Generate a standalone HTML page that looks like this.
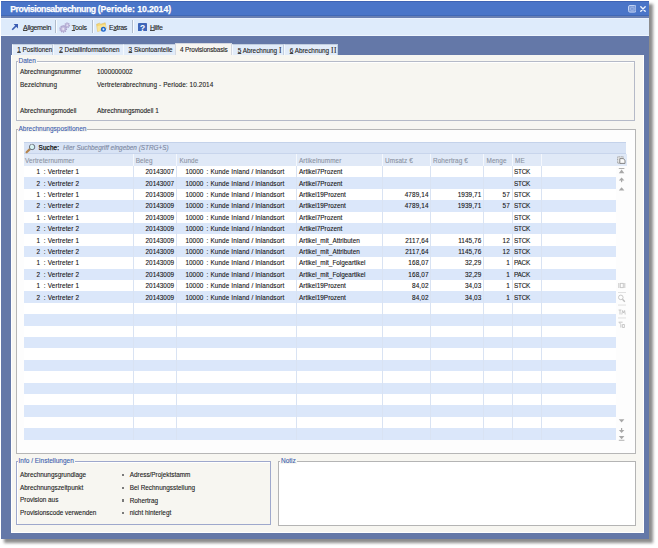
<!DOCTYPE html>
<html><head><meta charset="utf-8">
<style>
*{margin:0;padding:0;box-sizing:border-box}
html,body{width:658px;height:548px;overflow:hidden;background:#ffffff;position:relative}
body{font-family:"Liberation Sans",sans-serif;font-size:6.4px;color:#222;-webkit-text-stroke:0.1px currentColor}
.a{position:absolute}
.shadow{position:absolute;left:4px;top:4px;width:648.5px;height:539px;background:rgba(0,0,0,0.45);filter:blur(1.7px)}
.win{position:absolute;left:1px;top:1px;width:648px;height:538.3px;background:#6478a8}
.title{position:absolute;left:1px;top:1px;width:648px;height:15px;background:#4a75c8;border-top:1px solid #3f64b4;border-bottom:1px solid #4068b6}
.titleline{position:absolute;left:1px;top:16px;width:648px;height:1.5px;background:#6a80b2}
.ttxt{position:absolute;left:10.2px;top:4px;font-weight:bold;font-size:8.7px;color:#fff;white-space:nowrap;-webkit-text-stroke:0.25px #fff}
.toolbar{position:absolute;left:1px;top:17.5px;width:648px;height:18.2px;background:#deebfb;border-top:1px solid #eaf2fd;border-bottom:1px solid #eef5fe}
.tb{position:absolute;top:23.6px;font-size:7px;letter-spacing:-0.3px;color:#222;white-space:nowrap}
u{text-decoration-thickness:0.65px;text-underline-offset:0.3px;text-decoration-color:#444}
.tsep{position:absolute;top:19.8px;width:1px;height:12.8px;background:#b0bccc;box-shadow:1px 0 0 #f8fbff}
.panel{position:absolute;left:10.5px;top:55px;width:633.5px;height:478px;background:#f7f6f1;border-right:1px solid #fff;border-bottom:1px solid #fff;border-left:1px solid #fff}
.tab{position:absolute;top:44.3px;height:11px;background:#e2ecf9;border:1px solid #c2cedf;border-bottom:none;border-left-color:#f4f8fd;white-space:nowrap;font-size:6.4px;color:#222;padding-top:1.0px}
.tab.act{top:43.3px;height:12.2px;background:#f7f6f1;padding-top:2.2px;border-color:#d4d8e0}
.grp{position:absolute;border:1px solid #b5bac8;box-shadow:inset 1px 1px 0 #fff}
.glab{position:absolute;font-size:6.5px;color:#3d5eae;background:#f7f6f1;padding:0 1px;white-space:nowrap}
.lbl{position:absolute;white-space:nowrap}
.search{position:absolute;left:24px;top:142px;width:601.5px;height:11.5px;background:#d8e3f5;border-top:1px solid #c4d2ea;border-bottom:1px solid #c8d5ec}
.hdr{position:absolute;left:24px;top:153.5px;width:602.5px;height:12.3px;background:#e0e9f7}
.htxt{position:absolute;top:156.6px;color:#8a92a2;white-space:nowrap;letter-spacing:0.1px}
.hsep{position:absolute;top:154px;width:1px;height:12px;background:#f4f7fc}
.row{position:absolute;left:24px;width:592px;height:11.4px;background:#fff}
.row.alt{background:#dbe7fa}
.vl{position:absolute;top:166px;width:1px;height:273.6px;background:#d9e3f3}
.tr{position:absolute;left:0;width:658px;height:11.4px}
.c{position:absolute;top:2.3px;white-space:nowrap;color:#151515}
.ico{position:absolute}
</style></head><body>
<div class="shadow"></div>
<div class="win"></div>
<div class="title"></div>
<div class="titleline"></div>
<div class="ttxt"><span style="letter-spacing:-0.43px">Provisionsabrechnung </span><span style="letter-spacing:-0.06px">(Periode: 10.2014)</span></div>
<svg class="a" style="left:627.8px;top:5px" width="8.6" height="7.6" viewBox="0 0 8.6 7.6"><rect x="0.5" y="0.5" width="7.6" height="6.6" rx="1.4" fill="rgba(255,255,255,0.28)" stroke="#c4d4f4" stroke-width="1"/><rect x="2.6" y="2.3" width="3.4" height="3" rx="0.6" fill="none" stroke="#9fb6e8" stroke-width="0.9"/></svg>
<svg class="a" style="left:639.8px;top:5.6px" width="6" height="6" viewBox="0 0 6 6"><path d="M0.8 0.8L5.2 5.2M5.2 0.8L0.8 5.2" stroke="#f0f5ff" stroke-width="1.35" stroke-linecap="round"/></svg>
<div class="toolbar"></div>
<svg class="a" style="left:11px;top:23px" width="8" height="8" viewBox="0 0 8 8"><path d="M1.2 6.8L5.6 2.4" stroke="#3b5cb2" stroke-width="1.6" fill="none"/><path d="M2.6 1.0H7.0V5.4Z" fill="#3b5cb2"/></svg>
<div class="tb" style="left:23px"><u>A</u>llgemein</div>
<div class="tsep" style="left:55px"></div>
<svg class="a" style="left:59px;top:21.5px" width="12" height="11" viewBox="0 0 12 11">
<circle cx="8.2" cy="3.3" r="2.3" fill="none" stroke="#b4aad2" stroke-width="1.3" stroke-dasharray="1.1 0.7"/>
<circle cx="8.2" cy="3.3" r="1.8" fill="#c6bee0" stroke="#a49ac6" stroke-width="0.5"/>
<circle cx="8.2" cy="3.3" r="0.7" fill="#eeeaf6"/>
<circle cx="4.2" cy="6.9" r="3.2" fill="none" stroke="#ada2cc" stroke-width="1.4" stroke-dasharray="1.2 0.8"/>
<circle cx="4.2" cy="6.9" r="2.6" fill="#c8c0e0" stroke="#9c92c0" stroke-width="0.5"/>
<circle cx="4.2" cy="6.9" r="0.9" fill="#eeeaf6"/>
</svg>
<div class="tb" style="left:71.8px"><u>T</u>ools</div>
<div class="tsep" style="left:92.3px"></div>
<svg class="a" style="left:96px;top:21.5px" width="11" height="10" viewBox="0 0 11 10">
<path d="M0.6 2.2L3.6 1.2L4.8 2.2L9.2 0.8L10.2 6.8L1.6 9.4Z" fill="#f4d878" stroke="#dcb450" stroke-width="0.5"/>
<path d="M1.2 4.2L9.6 2.6L10.2 6.8L1.6 9.4Z" fill="#f8e49a"/>
<circle cx="7.4" cy="7.2" r="2.5" fill="#1e62c8"/><circle cx="7.4" cy="7.2" r="1.3" fill="#6aa8f0"/><rect x="7.1" y="6.4" width="0.7" height="1.8" fill="#fff"/>
</svg>
<div class="tb" style="left:109px">E<u>x</u>tras</div>
<div class="tsep" style="left:132.2px"></div>
<svg class="a" style="left:138.2px;top:22.5px" width="9" height="8.6" viewBox="0 0 9 8.6"><rect x="0" y="0" width="9" height="8.6" rx="0.8" fill="#3f66b8"/><text x="4.5" y="7.5" font-family="Liberation Sans" font-weight="bold" font-size="8.4" fill="#fff" text-anchor="middle">?</text></svg>
<div class="tb" style="left:150px"><u>H</u>ilfe</div>

<div class="tab" style="left:11.6px;width:41.9px;padding-left:4.6px"><u>1</u> Positionen</div>
<div class="tab" style="left:53px;width:70.5px;padding-left:5.2px"><u>2</u> Detailinformationen</div>
<div class="tab" style="left:123px;width:52.5px;padding-left:4.6px"><u>3</u> Skontoanteile</div>
<div class="panel"></div>
<div class="tab act" style="left:175px;width:56.5px;padding-left:4px;letter-spacing:-0.12px">4 Provisionsbasis</div>
<div class="tab" style="left:231.5px;width:52.5px;padding-left:5.2px"><u>5</u> Abrechnung <span style="font-family:'Liberation Serif';font-size:7.4px">I</span></div>
<div class="tab" style="left:283.5px;width:54px;padding-left:5.2px"><u>6</u> Abrechnung <span style="font-family:'Liberation Serif';font-size:7.4px;letter-spacing:0.6px">II</span></div>

<!-- Daten group -->
<div class="grp" style="left:15.8px;top:60.8px;width:619.5px;height:60.5px"></div>
<div class="glab" style="left:17.5px;top:56.6px">Daten</div>
<div class="lbl" style="left:20px;top:67.6px">Abrechnungsnummer</div>
<div class="lbl" style="left:97px;top:67.6px">1000000002</div>
<div class="lbl" style="left:20px;top:81.2px">Bezeichnung</div>
<div class="lbl" style="left:97px;top:81.2px;letter-spacing:0.1px">Vertreterabrechnung - Periode: 10.2014</div>
<div class="lbl" style="left:20px;top:106.9px">Abrechnungsmodell</div>
<div class="lbl" style="left:97px;top:106.9px">Abrechnungsmodell 1</div>

<!-- Positionen group -->
<div class="grp" style="left:15.8px;top:129.2px;width:620px;height:324.5px;background:#fdfdfd;border-color:#b6b6b6;box-shadow:none"></div>
<div class="glab" style="left:17.5px;top:125px">Abrechnungspositionen</div>
<div class="search"></div>
<svg class="a" style="left:24px;top:142px" width="12" height="12" viewBox="24 142 12 12"><path d="M29.6 149.4L26.6 152.2" stroke="#b4844e" stroke-width="2.2" stroke-linecap="round"/><circle cx="32.1" cy="147" r="2.7" fill="#d6f2f2" stroke="#5c6470" stroke-width="0.9"/><path d="M30.6 145.6A1.8 1.8 0 0 1 32.4 144.8" stroke="#fff" stroke-width="0.7" fill="none"/></svg>
<div class="lbl" style="left:38.6px;top:143.6px;color:#111;-webkit-text-stroke:0.25px #111;letter-spacing:0.1px">Suche:</div>
<div class="lbl" style="left:63px;top:143.6px;color:#7a86a0;font-style:italic">Hier Suchbegriff eingeben (STRG+S)</div>
<div class="hdr"></div>
<div class="hsep" style="left:133px"></div>
<div class="hsep" style="left:176px"></div>
<div class="hsep" style="left:296px"></div>
<div class="hsep" style="left:382px"></div>
<div class="hsep" style="left:430px"></div>
<div class="hsep" style="left:483px"></div>
<div class="hsep" style="left:512px"></div>
<div class="hsep" style="left:541px"></div>
<div class="htxt" style="left:25px">Vertreternummer</div>
<div class="htxt" style="left:135.7px">Beleg</div>
<div class="htxt" style="left:179.4px">Kunde</div>
<div class="htxt" style="left:299px">Artikelnummer</div>
<div class="htxt" style="left:385px">Umsatz €</div>
<div class="htxt" style="left:433px">Rohertrag €</div>
<div class="htxt" style="left:486.5px">Menge</div>
<div class="htxt" style="left:515px">ME</div>
<div class="row" style="top:166.00px"></div><div class="row alt" style="top:177.40px"></div><div class="row" style="top:188.80px"></div><div class="row alt" style="top:200.20px"></div><div class="row" style="top:211.60px"></div><div class="row alt" style="top:223.00px"></div><div class="row" style="top:234.40px"></div><div class="row alt" style="top:245.80px"></div><div class="row" style="top:257.20px"></div><div class="row alt" style="top:268.60px"></div><div class="row" style="top:280.00px"></div><div class="row alt" style="top:291.40px"></div><div class="row" style="top:302.80px"></div><div class="row alt" style="top:314.20px"></div><div class="row" style="top:325.60px"></div><div class="row alt" style="top:337.00px"></div><div class="row" style="top:348.40px"></div><div class="row alt" style="top:359.80px"></div><div class="row" style="top:371.20px"></div><div class="row alt" style="top:382.60px"></div><div class="row" style="top:394.00px"></div><div class="row alt" style="top:405.40px"></div><div class="row" style="top:416.80px"></div><div class="row alt" style="top:428.20px"></div>
<div class="vl" style="left:133px"></div>
<div class="vl" style="left:176px"></div>
<div class="vl" style="left:296px"></div>
<div class="vl" style="left:382px"></div>
<div class="vl" style="left:430px"></div>
<div class="vl" style="left:483px"></div>
<div class="vl" style="left:512px"></div>
<div class="vl" style="left:541px"></div>
<div class="tr" style="top:166.00px"><span class="c" style="left:36.5px">1</span><span class="c" style="left:43.8px;letter-spacing:0.16px">: Vertreter 1</span><span class="c" style="right:484px">20143007</span><span class="c" style="left:185.5px">10000</span><span class="c" style="left:206.6px;letter-spacing:0.12px">: Kunde Inland / Inlandsort</span><span class="c" style="left:299px">Artikel7Prozent</span><span class="c" style="right:229.39999999999998px;letter-spacing:0.12px"></span><span class="c" style="right:176.7px;letter-spacing:0.08px"></span><span class="c" style="right:147.89999999999998px;letter-spacing:0.2px"></span><span class="c" style="left:514px;letter-spacing:-0.25px">STCK</span></div><div class="tr" style="top:177.40px"><span class="c" style="left:36.5px">2</span><span class="c" style="left:43.8px;letter-spacing:0.16px">: Vertreter 2</span><span class="c" style="right:484px">20143007</span><span class="c" style="left:185.5px">10000</span><span class="c" style="left:206.6px;letter-spacing:0.12px">: Kunde Inland / Inlandsort</span><span class="c" style="left:299px">Artikel7Prozent</span><span class="c" style="right:229.39999999999998px;letter-spacing:0.12px"></span><span class="c" style="right:176.7px;letter-spacing:0.08px"></span><span class="c" style="right:147.89999999999998px;letter-spacing:0.2px"></span><span class="c" style="left:514px;letter-spacing:-0.25px">STCK</span></div><div class="tr" style="top:188.80px"><span class="c" style="left:36.5px">1</span><span class="c" style="left:43.8px;letter-spacing:0.16px">: Vertreter 1</span><span class="c" style="right:484px">20143009</span><span class="c" style="left:185.5px">10000</span><span class="c" style="left:206.6px;letter-spacing:0.12px">: Kunde Inland / Inlandsort</span><span class="c" style="left:299px">Artikel19Prozent</span><span class="c" style="right:229.39999999999998px;letter-spacing:0.12px">4789,14</span><span class="c" style="right:176.7px;letter-spacing:0.08px">1939,71</span><span class="c" style="right:147.89999999999998px;letter-spacing:0.2px">57</span><span class="c" style="left:514px;letter-spacing:-0.25px">STCK</span></div><div class="tr" style="top:200.20px"><span class="c" style="left:36.5px">2</span><span class="c" style="left:43.8px;letter-spacing:0.16px">: Vertreter 2</span><span class="c" style="right:484px">20143009</span><span class="c" style="left:185.5px">10000</span><span class="c" style="left:206.6px;letter-spacing:0.12px">: Kunde Inland / Inlandsort</span><span class="c" style="left:299px">Artikel19Prozent</span><span class="c" style="right:229.39999999999998px;letter-spacing:0.12px">4789,14</span><span class="c" style="right:176.7px;letter-spacing:0.08px">1939,71</span><span class="c" style="right:147.89999999999998px;letter-spacing:0.2px">57</span><span class="c" style="left:514px;letter-spacing:-0.25px">STCK</span></div><div class="tr" style="top:211.60px"><span class="c" style="left:36.5px">1</span><span class="c" style="left:43.8px;letter-spacing:0.16px">: Vertreter 1</span><span class="c" style="right:484px">20143009</span><span class="c" style="left:185.5px">10000</span><span class="c" style="left:206.6px;letter-spacing:0.12px">: Kunde Inland / Inlandsort</span><span class="c" style="left:299px">Artikel7Prozent</span><span class="c" style="right:229.39999999999998px;letter-spacing:0.12px"></span><span class="c" style="right:176.7px;letter-spacing:0.08px"></span><span class="c" style="right:147.89999999999998px;letter-spacing:0.2px"></span><span class="c" style="left:514px;letter-spacing:-0.25px">STCK</span></div><div class="tr" style="top:223.00px"><span class="c" style="left:36.5px">2</span><span class="c" style="left:43.8px;letter-spacing:0.16px">: Vertreter 2</span><span class="c" style="right:484px">20143009</span><span class="c" style="left:185.5px">10000</span><span class="c" style="left:206.6px;letter-spacing:0.12px">: Kunde Inland / Inlandsort</span><span class="c" style="left:299px">Artikel7Prozent</span><span class="c" style="right:229.39999999999998px;letter-spacing:0.12px"></span><span class="c" style="right:176.7px;letter-spacing:0.08px"></span><span class="c" style="right:147.89999999999998px;letter-spacing:0.2px"></span><span class="c" style="left:514px;letter-spacing:-0.25px">STCK</span></div><div class="tr" style="top:234.40px"><span class="c" style="left:36.5px">1</span><span class="c" style="left:43.8px;letter-spacing:0.16px">: Vertreter 1</span><span class="c" style="right:484px">20143009</span><span class="c" style="left:185.5px">10000</span><span class="c" style="left:206.6px;letter-spacing:0.12px">: Kunde Inland / Inlandsort</span><span class="c" style="left:299px">Artikel_mit_Attributen</span><span class="c" style="right:229.39999999999998px;letter-spacing:0.12px">2117,64</span><span class="c" style="right:176.7px;letter-spacing:0.08px">1145,76</span><span class="c" style="right:147.89999999999998px;letter-spacing:0.2px">12</span><span class="c" style="left:514px;letter-spacing:-0.25px">STCK</span></div><div class="tr" style="top:245.80px"><span class="c" style="left:36.5px">2</span><span class="c" style="left:43.8px;letter-spacing:0.16px">: Vertreter 2</span><span class="c" style="right:484px">20143009</span><span class="c" style="left:185.5px">10000</span><span class="c" style="left:206.6px;letter-spacing:0.12px">: Kunde Inland / Inlandsort</span><span class="c" style="left:299px">Artikel_mit_Attributen</span><span class="c" style="right:229.39999999999998px;letter-spacing:0.12px">2117,64</span><span class="c" style="right:176.7px;letter-spacing:0.08px">1145,76</span><span class="c" style="right:147.89999999999998px;letter-spacing:0.2px">12</span><span class="c" style="left:514px;letter-spacing:-0.25px">STCK</span></div><div class="tr" style="top:257.20px"><span class="c" style="left:36.5px">1</span><span class="c" style="left:43.8px;letter-spacing:0.16px">: Vertreter 1</span><span class="c" style="right:484px">20143009</span><span class="c" style="left:185.5px">10000</span><span class="c" style="left:206.6px;letter-spacing:0.12px">: Kunde Inland / Inlandsort</span><span class="c" style="left:299px">Artikel_mit_Folgeartikel</span><span class="c" style="right:229.39999999999998px;letter-spacing:0.12px">168,07</span><span class="c" style="right:176.7px;letter-spacing:0.08px">32,29</span><span class="c" style="right:147.89999999999998px;letter-spacing:0.2px">1</span><span class="c" style="left:514px;letter-spacing:-0.25px">PACK</span></div><div class="tr" style="top:268.60px"><span class="c" style="left:36.5px">2</span><span class="c" style="left:43.8px;letter-spacing:0.16px">: Vertreter 2</span><span class="c" style="right:484px">20143009</span><span class="c" style="left:185.5px">10000</span><span class="c" style="left:206.6px;letter-spacing:0.12px">: Kunde Inland / Inlandsort</span><span class="c" style="left:299px">Artikel_mit_Folgeartikel</span><span class="c" style="right:229.39999999999998px;letter-spacing:0.12px">168,07</span><span class="c" style="right:176.7px;letter-spacing:0.08px">32,29</span><span class="c" style="right:147.89999999999998px;letter-spacing:0.2px">1</span><span class="c" style="left:514px;letter-spacing:-0.25px">PACK</span></div><div class="tr" style="top:280.00px"><span class="c" style="left:36.5px">1</span><span class="c" style="left:43.8px;letter-spacing:0.16px">: Vertreter 1</span><span class="c" style="right:484px">20143009</span><span class="c" style="left:185.5px">10000</span><span class="c" style="left:206.6px;letter-spacing:0.12px">: Kunde Inland / Inlandsort</span><span class="c" style="left:299px">Artikel19Prozent</span><span class="c" style="right:229.39999999999998px;letter-spacing:0.12px">84,02</span><span class="c" style="right:176.7px;letter-spacing:0.08px">34,03</span><span class="c" style="right:147.89999999999998px;letter-spacing:0.2px">1</span><span class="c" style="left:514px;letter-spacing:-0.25px">STCK</span></div><div class="tr" style="top:291.40px"><span class="c" style="left:36.5px">2</span><span class="c" style="left:43.8px;letter-spacing:0.16px">: Vertreter 2</span><span class="c" style="right:484px">20143009</span><span class="c" style="left:185.5px">10000</span><span class="c" style="left:206.6px;letter-spacing:0.12px">: Kunde Inland / Inlandsort</span><span class="c" style="left:299px">Artikel19Prozent</span><span class="c" style="right:229.39999999999998px;letter-spacing:0.12px">84,02</span><span class="c" style="right:176.7px;letter-spacing:0.08px">34,03</span><span class="c" style="right:147.89999999999998px;letter-spacing:0.2px">1</span><span class="c" style="left:514px;letter-spacing:-0.25px">STCK</span></div>

<svg class="a" style="left:616px;top:154px" width="12" height="292" viewBox="616 154 12 292">
<rect x="617.6" y="156.8" width="5.6" height="6.4" fill="#e6e6e6" stroke="#8c8c8c" stroke-width="0.8" stroke-dasharray="1 0.6"/>
<path d="M619.8 158.6H623.2L625 160.2V163.4H619.8Z" fill="#fafafa" stroke="#6e6e6e" stroke-width="0.8"/>
<g fill="#a8a8a8">
<rect x="618.8" y="168.1" width="5.6" height="0.9"/>
<path d="M618.8 173.2L621.6 169.6L624.4 173.2Z"/>
<path d="M618.8 180.6L621.6 177.6L624.4 180.6Z"/><rect x="621" y="180" width="1.2" height="2.2"/>
<path d="M618.8 190.6L621.6 187.2L624.4 190.6Z"/>
<path d="M618.8 419.2L621.6 422.6L624.4 419.2Z"/>
<path d="M618.8 430L621.6 433L624.4 430Z"/><rect x="621" y="428" width="1.2" height="2.2"/>
<path d="M618.8 436L621.6 439.2L624.4 436Z"/><rect x="618.8" y="439.8" width="5.6" height="0.9"/>
</g>
<g fill="none" stroke="#bdbdbd" stroke-width="0.8">
<path d="M618.8 283V288M620.3 283V288M623.3 283V288M624.8 283V288M620.3 283.4H623.3M620.3 287.6H623.3"/>
<circle cx="620.8" cy="297.4" r="2.3"/><path d="M622.5 299.2L624.8 301.8" stroke-width="1.3"/>
<path d="M618.6 310H621.4M620 310V314.5M621.8 314.5L622.6 310.5L623.6 313L624.6 310.5L625.2 314.5"/>
<path d="M618.6 322.2H622.6M619.4 322.5L620.8 324.5V327.5M622.4 324.5V327.5M624.4 324.5V327.5M622.4 324.5H624.4M622.4 327.5H624.4"/>
</g>
<g fill="#d4d4d4"><rect x="618" y="292" width="8" height="0.7"/><rect x="618" y="304.7" width="8" height="0.7"/><rect x="618" y="317.6" width="8" height="0.7"/></g>
</svg>


<!-- Info group -->
<div class="grp" style="left:15.8px;top:460.8px;width:255.5px;height:64px;border-color:#9ea8cc"></div>
<div class="glab" style="left:17.5px;top:456.6px">Info / Einstellungen</div>
<div class="lbl" style="left:20px;top:470.6px">Abrechnungsgrundlage</div>
<div class="lbl" style="left:20px;top:484px">Abrechnungszeitpunkt</div>
<div class="lbl" style="left:20px;top:496.4px">Provision aus</div>
<div class="lbl" style="left:20px;top:508.9px">Provisionscode verwenden</div>
<div class="a" style="left:122px;top:473.5px;width:2.4px;height:2.4px;background:#7a7a7a"></div>
<div class="a" style="left:122px;top:486.7px;width:2.4px;height:2.4px;background:#7a7a7a"></div>
<div class="a" style="left:122px;top:499.4px;width:2.4px;height:2.4px;background:#7a7a7a"></div>
<div class="a" style="left:122px;top:511.8px;width:2.4px;height:2.4px;background:#7a7a7a"></div>
<div class="lbl" style="left:129.7px;top:471.2px">Adress/Projektstamm</div>
<div class="lbl" style="left:129.7px;top:484.2px">Bei Rechnungsstellung</div>
<div class="lbl" style="left:129.7px;top:496.8px">Rohertrag</div>
<div class="lbl" style="left:129.7px;top:509.3px">nicht hinterlegt</div>

<!-- Notiz group -->
<div class="grp" style="left:278.3px;top:461px;width:358px;height:64.8px;background:#fff;border-color:#b4b4b4;box-shadow:none"></div>
<div class="glab" style="left:280px;top:456.8px">Notiz</div>
</body></html>
